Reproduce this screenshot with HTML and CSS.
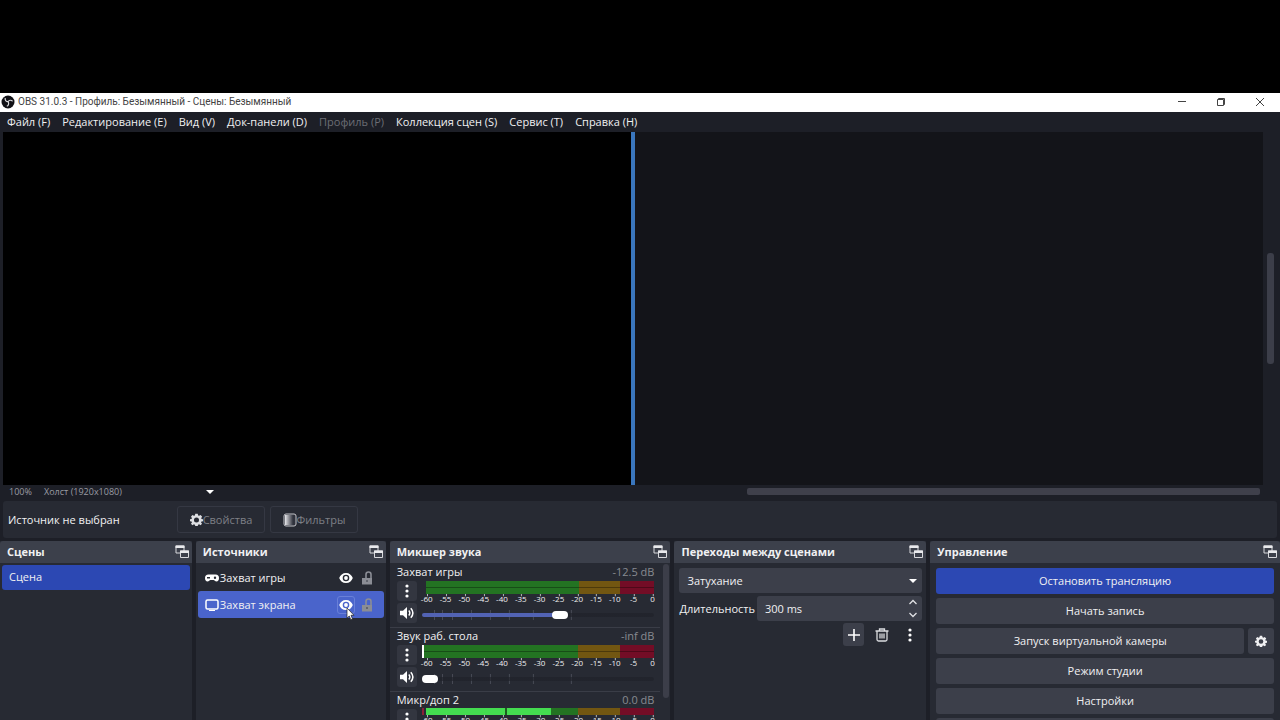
FILE: index.html
```html
<!DOCTYPE html>
<html lang="ru">
<head>
    <meta charset="UTF-8">
    <meta name="viewport" content="width=device-width, initial-scale=1.0">
    <title>OBS 31.0.3 - Профиль: Безымянный - Сцены: Безымянный</title>
    <link rel="stylesheet" href="styles.css">
</head>
<body>
    <svg class="symbols" aria-hidden="true">
        <symbol id="i-popout" viewBox="0 0 14 14">
            <path d="M1 1h8v7H1z" fill="none" stroke="#d8d9dd"/>
            <path d="M.5 .5h9V3h-9z" fill="#e8e9ec"/>
            <path d="M5.500 6h8v6.500h-8z" fill="#3c404b" stroke="#d8d9dd"/>
            <path d="M5 5.500h9V8H5z" fill="#e8e9ec"/>
        </symbol>
        <symbol id="i-gear" viewBox="0 0 16 16">
            <path fill-rule="evenodd" fill="currentColor" d="M6.500 1h3l.5 2 1.200.5L13 2.500 15 4.500l-1.200 1.800.4 1.200 1.800.3v2.400l-1.900.4-.5 1.200L14.800 13.200 13 15l-1.800-1.100-1.200.5-.5 1.600h-3l-.5-1.600-1.200-.5L3 15 1.200 13.200l1.200-1.600-.5-1.200L0 10V7.800l1.900-.3.5-1.200L1.200 4.500 3 2.500l1.800 1L6 3zM8 5.600a3.100 3.100 0 1 0 0 6.200 3.100 3.100 0 0 0 0-6.200z"/>
        </symbol>
        <symbol id="i-eye" viewBox="0 0 14 12">
            <path fill="#fff" fill-rule="evenodd" d="M7 1C3.700 1 1.300 3 .2 6c1.100 3 3.500 5 6.800 5s5.700-2 6.800-5C12.700 3 10.300 1 7 1zm0 1.700a3.300 3.300 0 1 1 0 6.600 3.300 3.300 0 0 1 0-6.600z"/>
            <circle cx="7" cy="6" r="1.900" fill="#fff"/>
        </symbol>
        <symbol id="i-lock" viewBox="0 0 12 14">
            <path d="M5 7V3.500a2.500 2.500 0 0 1 5 0V7" fill="none" stroke="#8b8d95" stroke-width="1.600"/>
            <path d="M1 7h10v6.500H1z" fill="#8b8d95"/>
            <circle cx="6" cy="10" r="1" fill="#555862"/>
        </symbol>
        <symbol id="i-dots" viewBox="0 0 14 14">
            <circle cx="7" cy="2" r="1.600" fill="#fff"/>
            <circle cx="7" cy="7" r="1.600" fill="#fff"/>
            <circle cx="7" cy="12" r="1.600" fill="#fff"/>
        </symbol>
        <symbol id="i-speaker" viewBox="0 0 14 14">
            <path d="M0 4.800h3L7 1v12L3 9.200H0z" fill="#fff"/>
            <path d="M8.800 4.500q2 2.500 0 5M10.800 2.200q4.200 4.800 0 9.600" fill="none" stroke="#fff" stroke-width="1.500"/>
        </symbol>
        <symbol id="i-scale" viewBox="0 0 229 4" preserveAspectRatio="none">
            <path d="M1.500 0v3M20.500 0v3M39.500 0v3M58.500 0v3M77.500 0v3M95.500 0v3M114.500 0v3M133.500 0v3M152.500 0v3M170.500 0v3M189.500 0v3M208.500 0v3M227.500 0v3" stroke="#c9cacf"/>
        </symbol>
        <symbol id="i-ticks" viewBox="0 0 233 14" preserveAspectRatio="none">
            <path d="M12.500 2v10M20.500 2v10M30.500 2v10M49.500 2v10M68.500 2v10M87.500 2v10M111.500 2v10M149.500 2v10" stroke="#484b56"/>
        </symbol>
    </svg>

    <div class="window">
        <header class="titlebar">
            <svg class="logo" viewBox="0 0 14 14">
                <circle cx="7" cy="7" r="6.500" fill="#111116"/>
                <path d="M4.300 3c-.6 2 .7 3.500 2.700 3.700C8.300 5 10 4.700 11.600 6.200M7.200 6.900c1 1.700.3 3.600-1.400 4.400" fill="none" stroke="#d9d9dc" stroke-width="1.200"/>
            </svg>
            <span class="title">OBS 31.0.3 - Профиль: Безымянный - Сцены: Безымянный</span>
            <button class="win-btn" aria-label="Свернуть"><svg viewBox="0 0 10 10"><path d="M1 4.500h8"/></svg></button>
            <button class="win-btn" aria-label="Развернуть"><svg viewBox="0 0 10 10"><path d="M1.500 2.500h6v6h-6zM2.500 2.500v-1h6v6h-1"/></svg></button>
            <button class="win-btn" aria-label="Закрыть"><svg viewBox="0 0 10 10"><path d="M1 1l8 8M9 1l-8 8"/></svg></button>
        </header>

        <nav class="menubar">
            <button>Файл (F)</button>
            <button>Редактирование (E)</button>
            <button>Вид (V)</button>
            <button>Док-панели (D)</button>
            <button disabled>Профиль (P)</button>
            <button>Коллекция сцен (S)</button>
            <button>Сервис (T)</button>
            <button>Справка (H)</button>
        </nav>

        <main class="preview">
            <div class="canvas"></div>
            <div class="outside"></div>
            <div class="vscroll"><div class="vthumb"></div></div>
        </main>

        <div class="preview-status">
            <span class="zoom">100%</span>
            <button class="canvas-size">Холст (1920x1080)<svg viewBox="0 0 10 6"><path d="M1 1h8L5 5z" fill="#fff"/></svg></button>
            <div class="hscroll"></div>
        </div>

        <section class="source-bar">
            <span class="source-name">Источник не выбран</span>
            <button class="outline-btn" disabled><svg class="gear"><use href="#i-gear"/></svg>Свойства</button>
            <button class="outline-btn" disabled>
                <svg viewBox="0 0 14 14">
                    <defs><linearGradient id="fade"><stop offset="0" stop-color="#e6e6ea"/><stop offset="1" stop-color="#30333d"/></linearGradient></defs>
                    <rect x="1" y="1" width="12" height="12" rx="2" fill="#30333d" stroke="#c4c5ca"/>
                    <path d="M2 2h8v10H2z" fill="url(#fade)"/>
                </svg>Фильтры
            </button>
        </section>

        <div class="docks">
            <section class="dock">
                <h2>Сцены <svg><use href="#i-popout"/></svg></h2>
                <ul class="scenes">
                    <li class="active">Сцена</li>
                </ul>
            </section>

            <section class="dock">
                <h2>Источники <svg><use href="#i-popout"/></svg></h2>
                <ul class="sources">
                    <li>
                        <svg class="kind" viewBox="0 0 14 12"><path fill="#fff" fill-rule="evenodd" d="M3.500 2.500h7A3.500 3.500 0 0 1 14 6c0 2-1 3.500-2.500 3.500S9.500 8 8.500 8h-3c-1 0-1.500 1.500-3 1.500S0 8 0 6a3.500 3.500 0 0 1 3.500-3.500zM2 5v1.500h3V5zm8-.5a1.200 1.200 0 1 0 0 2.400 1.200 1.200 0 0 0 0-2.400z"/></svg>
                        <span>Захват игры</span>
                        <button class="eye" aria-label="Видимость"><svg><use href="#i-eye"/></svg></button>
                        <button class="lock" aria-label="Блокировка"><svg><use href="#i-lock"/></svg></button>
                    </li>
                    <li class="active">
                        <svg class="kind" viewBox="0 0 14 12"><rect x="1" y="1" width="12" height="9" rx="1.500" fill="none" stroke="#fff" stroke-width="1.500"/><path d="M4 11h6v1H4z" fill="#fff"/></svg>
                        <span>Захват экрана</span>
                        <button class="eye hover" aria-label="Видимость">
                            <svg><use href="#i-eye"/></svg>
                            <svg class="cursor" viewBox="0 0 9 14"><path d="M1 1v10l2.300-2 1.500 3.800 1.700-.8L5 8.300h3z" fill="#fff" stroke="#222" stroke-width=".7"/></svg>
                        </button>
                        <button class="lock" aria-label="Блокировка"><svg><use href="#i-lock"/></svg></button>
                    </li>
                </ul>
            </section>

            <section class="dock">
                <h2>Микшер звука <svg><use href="#i-popout"/></svg></h2>
                <div class="mixer">
                    <div class="channels">
                        <div class="channel">
                            <div class="channel-name"><label for="vol1">Захват игры</label><span>-12.5 dB</span></div>
                            <div class="channel-body">
                                <div class="channel-btns">
                                    <button aria-label="Меню"><svg><use href="#i-dots"/></svg></button>
                                    <button aria-label="Звук"><svg><use href="#i-speaker"/></svg></button>
                                </div>
                                <div class="channel-main">
                                    <div class="meter"></div>
                                    <svg class="scale"><use href="#i-scale"/></svg>
                                    <div class="numbers"><span>-60</span><span>-55</span><span>-50</span><span>-45</span><span>-40</span><span>-35</span><span>-30</span><span>-25</span><span>-20</span><span>-15</span><span>-10</span><span>-5</span><span>0</span></div>
                                    <div class="fader">
                                        <svg><use href="#i-ticks"/></svg>
                                        <input type="range" id="vol1" value="60" style="--level: 60%">
                                    </div>
                                </div>
                            </div>
                        </div>
                        <div class="channel">
                            <div class="channel-name"><label for="vol2">Звук раб. стола</label><span>-inf dB</span></div>
                            <div class="channel-body">
                                <div class="channel-btns">
                                    <button aria-label="Меню"><svg><use href="#i-dots"/></svg></button>
                                    <button aria-label="Звук"><svg><use href="#i-speaker"/></svg></button>
                                </div>
                                <div class="channel-main">
                                    <div class="meter idle"></div>
                                    <svg class="scale"><use href="#i-scale"/></svg>
                                    <div class="numbers"><span>-60</span><span>-55</span><span>-50</span><span>-45</span><span>-40</span><span>-35</span><span>-30</span><span>-25</span><span>-20</span><span>-15</span><span>-10</span><span>-5</span><span>0</span></div>
                                    <div class="fader">
                                        <svg><use href="#i-ticks"/></svg>
                                        <input type="range" id="vol2" value="0" style="--level: 0%">
                                    </div>
                                </div>
                            </div>
                        </div>
                        <div class="channel">
                            <div class="channel-name"><span>Микр/доп 2</span><span>0.0 dB</span></div>
                            <div class="channel-body">
                                <div class="channel-btns">
                                    <button aria-label="Меню"><svg><use href="#i-dots"/></svg></button>
                                </div>
                                <div class="channel-main">
                                    <div class="meter live"></div>
                                    <svg class="scale"><use href="#i-scale"/></svg>
                                    <div class="numbers"><span>-60</span><span>-55</span><span>-50</span><span>-45</span><span>-40</span><span>-35</span><span>-30</span><span>-25</span><span>-20</span><span>-15</span><span>-10</span><span>-5</span><span>0</span></div>
                                </div>
                            </div>
                        </div>
                    </div>
                    <div class="mixer-scroll"></div>
                </div>
            </section>

            <section class="dock">
                <h2>Переходы между сценами <svg><use href="#i-popout"/></svg></h2>
                <div class="transitions">
                    <div class="select-wrap">
                        <select aria-label="Переход">
                            <option>Затухание</option>
                        </select>
                        <svg viewBox="0 0 10 6"><path d="M1 1h8L5 5z" fill="#fff"/></svg>
                    </div>
                    <div class="duration">
                        <label for="duration">Длительность</label>
                        <div class="spin">
                            <input type="text" id="duration" value="300 ms">
                            <div class="spin-btns">
                                <button aria-label="Больше"><svg viewBox="0 0 10 6"><path d="M1.500 5L5 1.500 8.500 5"/></svg></button>
                                <button aria-label="Меньше"><svg viewBox="0 0 10 6"><path d="M1.500 1L5 4.500 8.500 1"/></svg></button>
                            </div>
                        </div>
                    </div>
                    <div class="tools">
                        <button class="add" aria-label="Добавить"><svg viewBox="0 0 14 14"><path d="M7 1v12M1 7h12" stroke="#fff" stroke-width="1.600"/></svg></button>
                        <button aria-label="Удалить"><svg viewBox="0 0 14 14"><path d="M.5 3h13M4.500 3V1h5v2M2 3v8.500Q2 13 3.500 13h7q1.500 0 1.500-1.500V3M5 5.500v5M7 5.500v5M9 5.500v5" fill="none" stroke="#dcdde1" stroke-width="1.300"/></svg></button>
                        <button aria-label="Ещё"><svg><use href="#i-dots"/></svg></button>
                    </div>
                </div>
            </section>

            <section class="dock">
                <h2>Управление <svg><use href="#i-popout"/></svg></h2>
                <div class="controls">
                    <button class="streaming">Остановить трансляцию</button>
                    <button>Начать запись</button>
                    <div class="camera">
                        <button>Запуск виртуальной камеры</button>
                        <button aria-label="Настройки камеры"><svg><use href="#i-gear"/></svg></button>
                    </div>
                    <button>Режим студии</button>
                    <button>Настройки</button>
                    <button aria-label="Выход"></button>
                </div>
            </section>
        </div>
    </div>
</body>
</html>
```
FILE: styles.css
```css
* {
    margin: 0;
    padding: 0;
    box-sizing: border-box;
}

body {
    height: 100vh;
    padding-top: 93px;
    overflow: hidden;
    background: #000;
    color: #f0f0f2;
    font-family: 'Open Sans', 'Noto Sans', sans-serif;
    font-size: 11px;
    line-height: 16px;
}

button, input, select {
    font: inherit;
    color: inherit;
    border: none;
    background: none;
}

ul {
    list-style: none;
}

svg {
    display: block;
    flex: none;
    width: 14px;
    height: 14px;
}

.symbols {
    position: absolute;
    width: 0;
    height: 0;
}

.window {
    display: flex;
    flex-direction: column;
    height: 100%;
    background: #1d1f27;
}

/* title bar and menu */
.titlebar {
    display: flex;
    align-items: center;
    height: 19px;
    padding: 0 1px 1px;
    background: #fff;
    color: #444;
    font-family: Roboto, sans-serif;
    font-size: 10px;
}

.title {
    flex: 1;
    padding-left: 3px;
}

.win-btn {
    display: flex;
    align-items: center;
    justify-content: center;
    width: 39px;
    height: 18px;
}

.win-btn svg {
    width: 10px;
    height: 10px;
    fill: none;
    stroke: #444;
}

.menubar {
    display: flex;
    gap: 12px;
    height: 20px;
    padding: 0 7px;
}

.menubar button:disabled {
    color: #6c6e75;
}

/* preview */
.preview {
    display: flex;
    flex: 1;
    padding-left: 3px;
    min-height: 0;
}

.canvas {
    flex: 1;
    background: #000;
    border-right: 4px solid #3a76bd;
}

.outside {
    flex: 1;
    background: #131419;
}

.vscroll {
    width: 17px;
    padding: 121px 6px 0 4px;
}

.vthumb {
    height: 111px;
    border-radius: 3px;
    background: #3c3e49;
}

.preview-status {
    display: flex;
    align-items: center;
    height: 16px;
    padding: 0 20px 3px 9px;
    color: #9a9ca3;
    font-size: 9px;
}

.zoom {
    width: 35px;
}

.canvas-size {
    display: flex;
    align-items: center;
    justify-content: space-between;
    width: 171px;
}

.canvas-size svg {
    width: 10px;
    height: 6px;
}

.hscroll {
    width: 41%;
    height: 7px;
    margin-left: auto;
    border-radius: 2px;
    background: #3f404b;
}

/* selected source toolbar */
.source-bar {
    display: flex;
    align-items: center;
    gap: 5px;
    height: 37px;
    margin: 0 3px 3px;
    padding-left: 5px;
    border-radius: 3px;
    background: #272a33;
}

.source-name {
    width: 164px;
}

.outline-btn {
    display: flex;
    align-items: center;
    justify-content: center;
    width: 88px;
    height: 27px;
    border: 1px solid #353843;
    border-radius: 3px;
    color: #7e8087;
}

.outline-btn .gear {
    width: 13px;
    height: 13px;
    color: #dedfe3;
}

/* docks */
.docks {
    display: grid;
    grid-template-columns: 192fr 190fr 281fr 252fr 350fr;
    gap: 4px;
    height: 179px;
    overflow: hidden;
}

.dock {
    min-width: 0;
    background: #272a33;
}

.dock h2 {
    display: flex;
    align-items: center;
    justify-content: space-between;
    height: 22px;
    padding: 0 3px 0 7px;
    border-radius: 3px 3px 0 0;
    background: #3c404b;
    font-size: 11px;
    font-weight: 700;
}

.scenes, .sources {
    padding: 2px;
}

.scenes li {
    height: 25px;
    padding: 4px 7px;
    border-radius: 3px;
}

.scenes .active {
    background: #2c48b3;
}

.sources {
    padding-top: 1px;
}

.sources li {
    display: flex;
    align-items: center;
    height: 27px;
    padding: 0 8px 0 7px;
    border-radius: 3px;
}

.sources .active {
    background: #4a64cb;
}

.sources span {
    flex: 1;
    padding-left: 1px;
}

.kind {
    height: 12px;
}

.eye, .lock {
    display: flex;
    align-items: center;
    justify-content: center;
    width: 18px;
    height: 18px;
    border: 1px solid transparent;
    border-radius: 3px;
}

.eye {
    position: relative;
    margin-right: 3px;
}

.eye svg {
    height: 12px;
}

.lock svg {
    width: 12px;
}

.hover {
    border-color: #6980d8;
}

.eye .cursor {
    position: absolute;
    top: 10px;
    left: 8px;
    width: 9px;
    height: 14px;
}

/* mixer */
.mixer {
    display: flex;
    padding: 1px 1px 0 0;
}

.channels {
    flex: 1;
}

.channel {
    height: 64px;
    padding: 0 6px 0 7px;
    border-bottom: 1px solid #3a3d47;
}

.channel-name {
    display: flex;
    justify-content: space-between;
}

.channel-name span:last-child {
    color: #888a91;
}

.channel-body {
    display: flex;
    gap: 5px;
}

.channel-btns {
    display: flex;
    flex-direction: column;
    gap: 2px;
    padding-top: 1px;
}

.channel-btns button {
    display: flex;
    align-items: center;
    justify-content: center;
    width: 20px;
    height: 20px;
    border-radius: 3px;
    background: #333640;
}

.channel-main {
    flex: 1;
    min-width: 0;
}

.meter {
    height: 13px;
    margin: 1px 0 0 4px;
    background:
        linear-gradient(#0005, #0005) 0 6px / 100% 1px no-repeat,
        linear-gradient(90deg, #237322 67%, #725611 67% 85%, #730d26 85%);
}

.idle {
    margin-left: 0;
    border-left: 2px solid #fff;
}

.live {
    height: 7px;
    margin: 0;
    border-left: 2px solid #8c2038;
    background: linear-gradient(90deg, #272a33 1%, #44dc50 1% 35%, #1d5d20 35% 36%, #44dc50 36% 55%, #237322 55% 67%, #725611 67% 85%, #730d26 85%);
}

.scale {
    width: calc(100% - 4px);
    height: 3px;
    margin-left: 4px;
}

.numbers {
    display: flex;
    justify-content: space-between;
    margin: -2px -6px 0 -3px;
    font-size: 8px;
    line-height: 8px;
}

.numbers span {
    width: 16px;
    text-align: center;
}

.fader {
    display: grid;
    align-items: center;
    margin-top: 5px;
}

.fader svg, .fader input {
    grid-area: 1 / 1;
    width: 100%;
    height: 14px;
}

.fader input {
    appearance: none;
}

.fader input::-webkit-slider-runnable-track {
    height: 4px;
    border-radius: 2px;
    background: linear-gradient(90deg, #5263b4 var(--level), #1f2129aa var(--level));
}

.fader input::-webkit-slider-thumb {
    appearance: none;
    width: 16px;
    height: 8px;
    margin-top: -2px;
    border-radius: 4px;
    background: #fff;
}

.mixer-scroll {
    width: 6px;
    height: 134px;
    margin-left: 3px;
    border-radius: 3px;
    background: #3c3e49;
}

/* transitions */
.transitions {
    padding: 5px 4px 0 5px;
}

.select-wrap {
    display: grid;
    align-items: center;
    border-radius: 3px;
    background: #3c3f4a;
}

.select-wrap select {
    grid-area: 1 / 1;
    appearance: none;
    width: 100%;
    height: 25px;
    padding: 0 8px;
}

.select-wrap svg {
    grid-area: 1 / 1;
    justify-self: end;
    width: 18px;
    height: 6px;
}

.duration {
    display: flex;
    align-items: center;
    gap: 2px;
    margin-top: 3px;
}

.spin {
    display: flex;
    flex: 1;
    min-width: 0;
    height: 25px;
    border-radius: 3px;
    background: #3c3f4a;
}

.spin input {
    flex: 1;
    min-width: 0;
    padding: 0 8px;
}

.spin-btns {
    display: flex;
    flex-direction: column;
    width: 19px;
}

.spin-btns button {
    display: flex;
    flex: 1;
    align-items: center;
    justify-content: center;
}

.spin-btns svg {
    width: 10px;
    height: 6px;
    fill: none;
    stroke: #e0e0e4;
    stroke-width: 1.3;
}

.tools {
    display: flex;
    justify-content: flex-end;
    gap: 7px;
    margin-top: 2px;
    padding-right: 2px;
}

.tools button {
    display: flex;
    align-items: center;
    justify-content: center;
    width: 21px;
    height: 23px;
    border-radius: 3px;
}

.tools .add {
    background: #3c3f4a;
}

/* controls */
.controls {
    display: flex;
    flex-direction: column;
    gap: 4px;
    padding: 5px 6px 0;
}

.controls button {
    height: 26px;
    flex: none;
    border-radius: 3px;
    background: #3c3f4a;
}

.controls .streaming {
    background: #2c48b3;
}

.controls .camera {
    display: flex;
    gap: 4px;
}

.controls .camera button:first-child {
    flex: 1;
}

.camera button:last-child {
    display: flex;
    align-items: center;
    justify-content: center;
    width: 26px;
}

.camera svg {
    width: 12px;
    height: 12px;
}
```
